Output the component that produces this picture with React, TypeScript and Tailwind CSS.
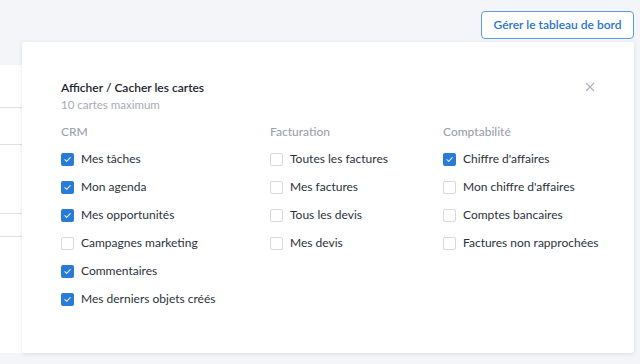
import React from "react";

type Item = { label: string; checked: boolean };
type Col = { title: string; width: string; items: Item[] };

const cols: Col[] = [
  {
    title: "CRM",
    width: "w-[209px]",
    items: [
      { label: "Mes tâches", checked: true },
      { label: "Mon agenda", checked: true },
      { label: "Mes opportunités", checked: true },
      { label: "Campagnes marketing", checked: false },
      { label: "Commentaires", checked: true },
      { label: "Mes derniers objets créés", checked: true },
    ],
  },
  {
    title: "Facturation",
    width: "w-[173px]",
    items: [
      { label: "Toutes les factures", checked: false },
      { label: "Mes factures", checked: false },
      { label: "Tous les devis", checked: false },
      { label: "Mes devis", checked: false },
    ],
  },
  {
    title: "Comptabilité",
    width: "w-[180px]",
    items: [
      { label: "Chiffre d'affaires", checked: true },
      { label: "Mon chiffre d'affaires", checked: false },
      { label: "Comptes bancaires", checked: false },
      { label: "Factures non rapprochées", checked: false },
    ],
  },
];

function Box({ checked }: { checked: boolean }) {
  if (checked) {
    return (
      <span className="flex h-[13px] w-[13px] shrink-0 items-center justify-center rounded-[2px] bg-[#2a7bd6]">
        <svg width="9" height="9" viewBox="0 0 10 10" fill="none">
          <path d="M2 5.2 L4.1 7.2 L8 2.8" stroke="#dbe9fb" strokeWidth="1.2" strokeLinecap="round" strokeLinejoin="round" />
        </svg>
      </span>
    );
  }
  return <span className="h-[13px] w-[13px] shrink-0 rounded-[2px] border border-[#d6d9de] bg-white" />;
}

export default function App() {
  return (
    <div
      className="relative h-[364px] w-[640px] overflow-hidden bg-[#f4f5f8]"
      style={{ fontFamily: "Lato, 'Open Sans', sans-serif" }}
    >
      <div className="flex justify-end pr-[6px] pt-[11px]">
        <button className="h-[28px] w-[153px] rounded-[4px] border border-[#5b9be3] bg-white text-[12px] font-semibold text-[#2a72cf]">
          Gérer le tableau de bord
        </button>
      </div>

      <div className="mt-[26px] flex w-[40px] flex-col">
        <div className="h-[43px] border-b border-[#dfe2e8] bg-white" />
        <div className="h-[37px] border-b border-[#dfe2e8] bg-white" />
        <div className="h-[69px] border-b border-[#dfe2e8] bg-white" />
        <div className="h-[23px] border-b border-[#dfe2e8] bg-white" />
        <div className="h-[116px] bg-white" />
      </div>

      <div className="absolute left-[22px] top-[42px] h-[311px] w-[612px] rounded-[3px] bg-white shadow-[0_1px_4px_rgba(40,50,70,0.12)]">
        <div className="relative px-[39px] pt-[38px]">
          <div className="text-[12px] font-semibold leading-[16px] text-[#1e2430]">Afficher / Cacher les cartes</div>
          <div className="mt-[1px] text-[11.5px] leading-[16px] text-[#a6abb3]">10 cartes maximum</div>
          <svg className="absolute right-[39px] top-[40px]" width="10" height="10" viewBox="0 0 10 10">
            <path d="M1 1 L9 9 M9 1 L1 9" stroke="#a9b0bb" strokeWidth="1.1" />
          </svg>

          <div className="mt-[11px] flex">
            {cols.map((c) => (
              <div key={c.title} className={`${c.width} shrink-0`}>
                <div className="text-[12px] font-medium leading-[16px] text-[#9ca1aa]">{c.title}</div>
                <div className="mt-[5px] flex flex-col">
                  {c.items.map((it) => (
                    <div key={it.label} className="flex h-[28px] items-center gap-[7px]">
                      <Box checked={it.checked} />
                      <span className="text-[12px] text-[#2b313b]">{it.label}</span>
                    </div>
                  ))}
                </div>
              </div>
            ))}
          </div>
        </div>
      </div>
    </div>
  );
}
